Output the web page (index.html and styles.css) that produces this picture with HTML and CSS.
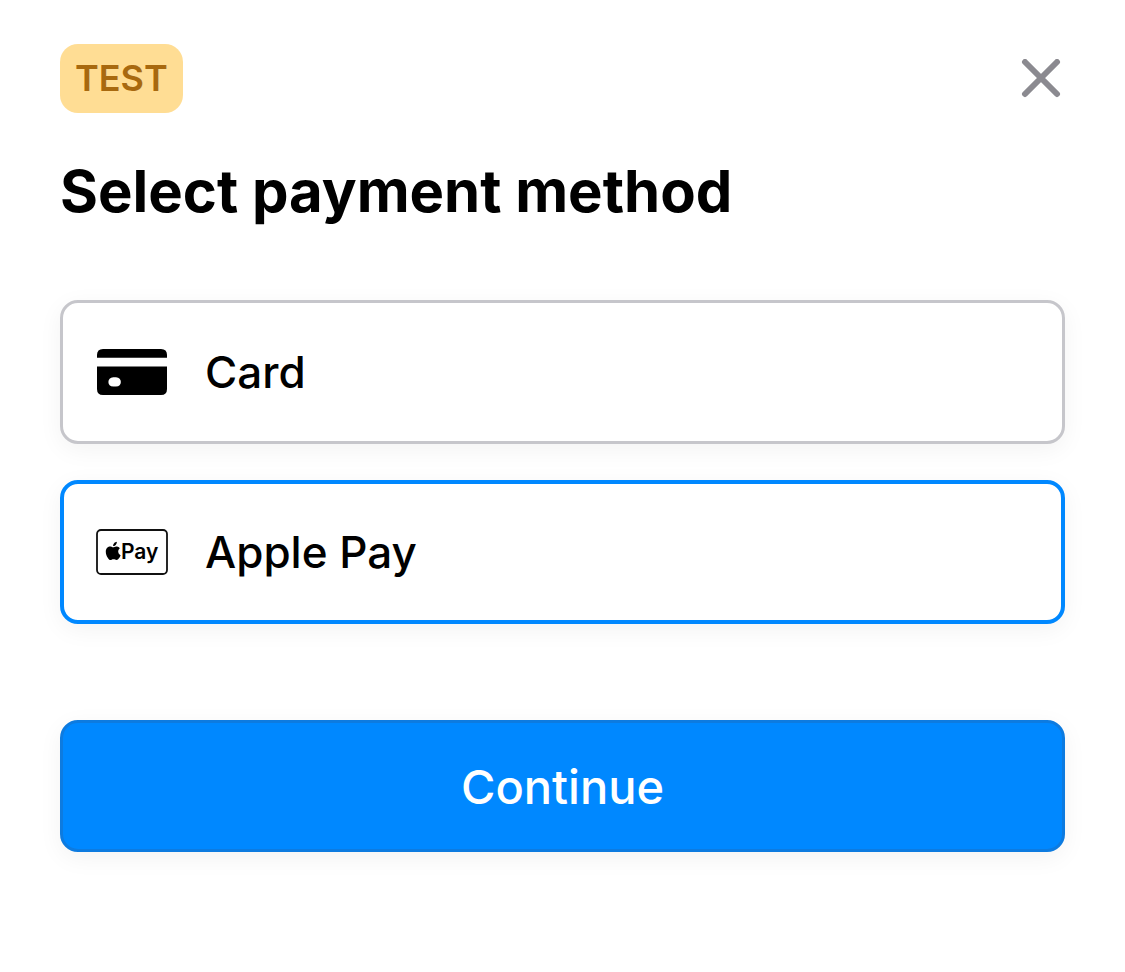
FILE: index.html
```html
<!DOCTYPE html>
<html lang="en">
<head>
<meta charset="utf-8">
<meta name="viewport" content="width=device-width, initial-scale=1">
<title>Select payment method</title>
<link rel="stylesheet" href="styles.css">
</head>
<body>
<main class="sheet">
  <header class="sheet-bar">
    <span class="badge">TEST</span>
    <button class="close" type="button" aria-label="Close">
      <svg class="close-icon" viewBox="0 0 40 40" aria-hidden="true"><path d="M4 3 36 35M36 3 4 35" fill="none" stroke="currentColor" stroke-width="6" stroke-linecap="round"/></svg>
    </button>
  </header>
  <h1 class="title">Select payment method</h1>
  <div class="methods">
    <button class="method" type="button" aria-pressed="false">
      <svg class="method-icon" viewBox="0 0 72 48" aria-hidden="true">
        <path d="M1 9.700V7Q1 1 7 1H65Q71 1 71 7V9.700Z"/>
        <path fill-rule="evenodd" d="M1 18.500H71V41Q71 47 65 47H7Q1 47 1 41ZM17.300 29.200C10.800 29.200 10.800 38.600 17.300 38.600H20C26.500 38.600 26.500 29.200 20 29.200Z"/>
      </svg>
      <span>Card</span>
    </button>
    <button class="method method-selected" type="button" aria-pressed="true">
      <svg class="method-icon" viewBox="0 0 72 48" aria-hidden="true">
        <rect x="1" y="2" width="70" height="44" rx="4" fill="#fff" stroke="#111" stroke-width="1.800"/>
        <g transform="translate(9.800 13.800) scale(.0182)"><path d="M788 341c-6 4-108 62-108 190 0 148 130 201 134 202-1 3-21 72-69 142-43 61-87 123-155 123s-85-40-164-40c-76 0-103 41-165 41s-105-57-155-127C49 790 0 665 0 545c0-190 123-291 245-291 65 0 119 43 160 43 39 0 99-45 173-45 28 0 130 2 197 98zM554 159c31-37 53-88 53-139 0-7-1-14-2-20-50 2-110 34-147 76-28 32-55 83-55 135 0 8 1 16 2 18 3 1 8 1 13 1 46 0 103-31 136-71z"/></g>
        <text class="pay-word" x="25" y="31">Pay</text>
      </svg>
      <span>Apple Pay</span>
    </button>
  </div>
  <button class="continue" type="button">Continue</button>
</main>
</body>
</html>
```

FILE: styles.css
```css
* { box-sizing: border-box; }

body {
  margin: 0;
  background: #fff;
  color: #000;
  font-family: Inter, "Liberation Sans", sans-serif;
}

button { font: inherit; color: inherit; cursor: pointer; }

.sheet { padding: 44px 60px; }

.sheet-bar {
  display: flex;
  align-items: center;
  justify-content: space-between;
}

.badge {
  padding: 12px 15px;
  border-radius: 18px;
  background: #ffdd94;
  color: #a8690f;
  font-size: 36px;
  font-weight: 600;
  line-height: 45px;
}

.close {
  display: flex;
  padding: 4px;
  border: 0;
  background: none;
  color: #8b8a90;
}

.close-icon { width: 40px; height: 40px; }

.title {
  margin: 42px 0 0;
  font-size: 58px;
  font-weight: 700;
  line-height: 73px;
}

.methods {
  display: flex;
  flex-direction: column;
  gap: 36px;
  margin-top: 72px;
}

.method {
  display: flex;
  align-items: center;
  gap: 37px;
  height: 144px;
  padding: 0 33px;
  border: 3px solid #c6c6cb;
  border-radius: 18px;
  background: #fff;
  box-shadow: 0 6px 24px rgba(0, 0, 0, .05);
  font-size: 44px;
  font-weight: 500;
  text-align: left;
}

.method-selected {
  padding: 0 32px;
  border: 4px solid #0088ff;
}

.method-icon { width: 72px; height: 48px; }

.pay-word { font-size: 21px; font-weight: 600; }

.continue {
  width: 100%;
  height: 132px;
  margin-top: 96px;
  border: 3px solid #0d7be0;
  border-radius: 18px;
  background: #0088ff;
  box-shadow: 0 6px 24px rgba(0, 0, 0, .05);
  color: #fff;
  font-size: 47px;
  font-weight: 500;
}
```
